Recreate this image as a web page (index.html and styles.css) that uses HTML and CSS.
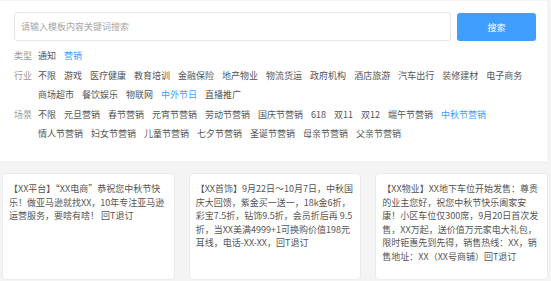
FILE: index.html
```html
<!DOCTYPE html>
<html lang="zh-CN">
<head>
    <meta charset="UTF-8">
    <meta name="viewport" content="width=device-width, initial-scale=1.0">
    <title>模板库</title>
    <link rel="stylesheet" href="styles.css">
</head>
<body>

<div class="filter-panel">
    <div class="search-bar">
        <input class="search-input" type="text" placeholder="请输入模板内容关键词搜索">
        <button class="search-btn">搜索</button>
    </div>

    <div class="filter-row">
        <span class="filter-label">类型</span>
        <div class="filter-items">
            <a class="item">通知</a>
            <a class="item active">营销</a>
        </div>
    </div>

    <div class="filter-row">
        <span class="filter-label">行业</span>
        <div class="filter-items">
            <a class="item">不限</a>
            <a class="item">游戏</a>
            <a class="item">医疗健康</a>
            <a class="item">教育培训</a>
            <a class="item">金融保险</a>
            <a class="item">地产物业</a>
            <a class="item">物流货运</a>
            <a class="item">政府机构</a>
            <a class="item">酒店旅游</a>
            <a class="item">汽车出行</a>
            <a class="item">装修建材</a>
            <a class="item">电子商务</a>
            <a class="item">商场超市</a>
            <a class="item">餐饮娱乐</a>
            <a class="item">物联网</a>
            <a class="item active">中外节日</a>
            <a class="item">直播推广</a>
        </div>
    </div>

    <div class="filter-row">
        <span class="filter-label">场景</span>
        <div class="filter-items">
            <a class="item">不限</a>
            <a class="item">元旦营销</a>
            <a class="item">春节营销</a>
            <a class="item">元宵节营销</a>
            <a class="item">劳动节营销</a>
            <a class="item">国庆节营销</a>
            <a class="item">618</a>
            <a class="item">双11</a>
            <a class="item">双12</a>
            <a class="item">端午节营销</a>
            <a class="item active">中秋节营销</a>
            <a class="item">情人节营销</a>
            <a class="item">妇女节营销</a>
            <a class="item">儿童节营销</a>
            <a class="item">七夕节营销</a>
            <a class="item">圣诞节营销</a>
            <a class="item">母亲节营销</a>
            <a class="item">父亲节营销</a>
        </div>
    </div>
</div>

<div class="template-list">
    <div class="template-card">
        【XX平台】“XX电商”恭祝您中秋节快乐！做亚马逊就找XX，10年专注亚马逊运营服务，要啥有啥！ 回T退订
    </div>
    <div class="template-card">
        【XX首饰】9月22日～10月7日，中秋国庆大回馈，紫金买一送一，18k金6折，彩宝7.5折，钻饰9.5折，会员折后再 9.5折，当XX美满4999+1可换购价值198元耳线，电话-XX-XX，回T退订
    </div>
    <div class="template-card">
        【XX物业】XX地下车位开始发售：尊贵的业主您好，祝您中秋节快乐阖家安康！小区车位仅300席，9月20日首次发售，XX万起，送价值万元家电大礼包，限时钜惠先到先得，销售热线：XX，销售地址：XX（XX号商铺）回T退订
    </div>
</div>

</body>
</html>
```

FILE: styles.css
```css
body {
    margin: 0;
    background-color: #f4f4f4; /* page grey */
    font-family: 'Noto Sans CJK SC', sans-serif;
    font-size: 9px;
    color: #333333;
}

.filter-panel {
    width: 547px;
    box-sizing: border-box;
    margin-top: 1px;
    padding: 11px 11px 17px 14px;
    background-color: #ffffff;
}

.search-bar {
    display: flex;
    gap: 6px;
    margin-bottom: 5px;
}

.search-input {
    flex: 1;
    height: 29px;
    box-sizing: border-box;
    padding: 0 6px;
    border: 1px solid #e6e6e6;
    border-radius: 3px;
    font-family: inherit;
    font-size: 9px;
    color: #333333;
    outline: none;
}

.search-input::placeholder {
    color: #a8a8a8;
}

.search-btn {
    width: 79px;
    height: 28px;
    margin-top: 1px;
    border: none;
    border-radius: 3px;
    background-color: #409eff; /* primary blue */
    font-family: inherit;
    font-size: 9px;
    color: #ffffff;
}

.filter-row {
    display: flex;
    line-height: 19px;
    margin-bottom: 1px;
}

.filter-label {
    flex: none;
    width: 24px;
    color: #9a9a9a;
}

.filter-items {
    flex: 1;
    display: flex;
    flex-wrap: wrap;
    column-gap: 8px;
}

.item {
    color: #555555;
    white-space: nowrap;
}

.item.active {
    color: #409eff;
}

.template-list {
    display: grid;
    grid-template-columns: repeat(3, 1fr);
    gap: 14px;
    margin-top: 12px;
    padding: 0 3px 0 2px;
}

.template-card {
    height: 107px;
    box-sizing: border-box;
    padding: 8px 6px 7px;
    background-color: #ffffff;
    border: 1px solid #ebebeb;
    border-radius: 4px;
    line-height: 13.6px;
    color: #555555;
}
```
